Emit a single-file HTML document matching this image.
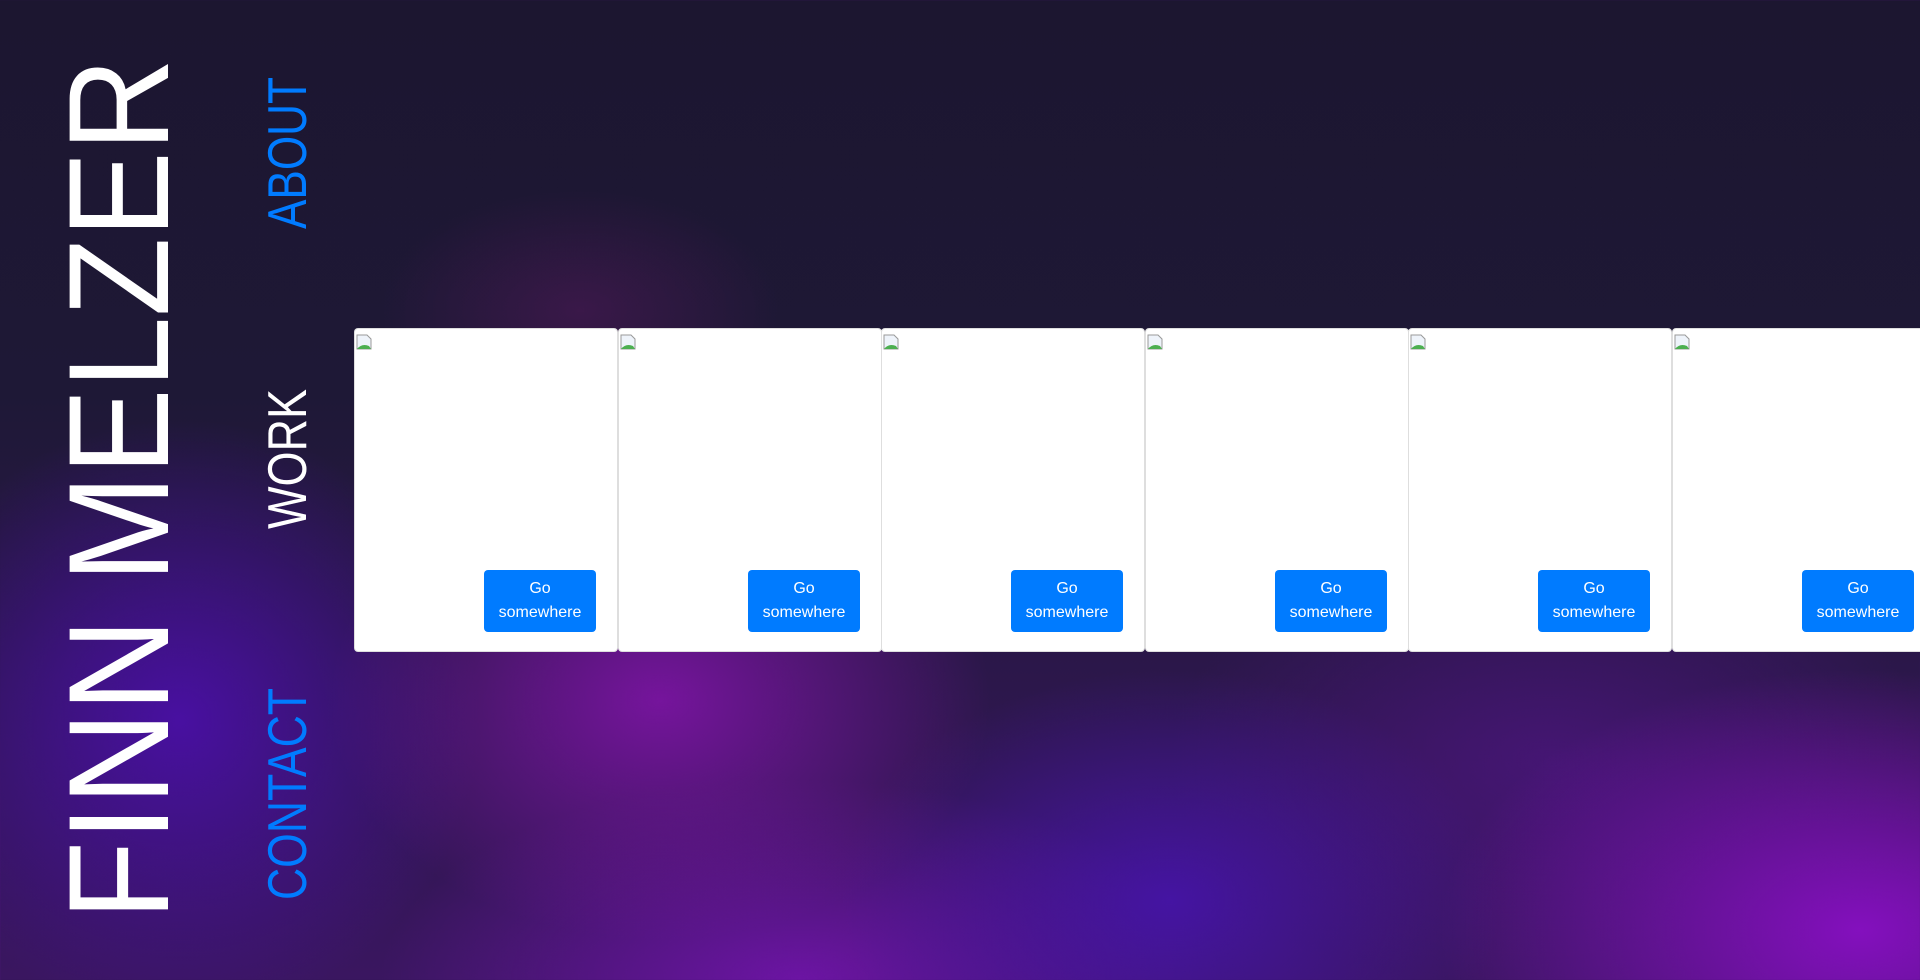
<!DOCTYPE html>
<html><head><meta charset="utf-8"><style>
html,body{margin:0;padding:0;width:1920px;height:980px;overflow:hidden}
body{position:relative;font-family:"Liberation Sans",sans-serif;
background:
radial-gradient(ellipse 330px 240px at 660px 700px,rgba(130,20,170,.85),rgba(130,20,170,0) 100%),
radial-gradient(ellipse 420px 260px at 1860px 930px,rgba(140,15,200,.9),rgba(140,15,200,0) 100%),
radial-gradient(ellipse 330px 230px at 1170px 900px,rgba(70,20,170,.9),rgba(70,20,170,0) 100%),
radial-gradient(ellipse 300px 300px at 180px 720px,rgba(75,15,170,.9),rgba(75,15,170,0) 100%),
radial-gradient(ellipse 420px 200px at 800px 980px,rgba(120,20,180,.8),rgba(120,20,180,0) 100%),
radial-gradient(ellipse 200px 120px at 580px 310px,rgba(110,25,110,.35),rgba(110,25,110,0) 100%),
radial-gradient(ellipse 380px 230px at 1550px 760px,rgba(90,20,150,.5),rgba(90,20,150,0) 100%),
linear-gradient(#1c1630,#1e1836 40%,#3a1660 100%);}
.card{position:absolute;top:328px;height:322px;width:262px;background:#fff;border:1px solid rgba(0,0,0,.13);border-radius:4px}
.ic{position:absolute;left:1px;top:5px}
.btn{position:absolute;right:21px;bottom:19px;width:112px;height:62px;background:#007bff;border-radius:4px;color:#fff;font-size:16px;line-height:24px;text-align:center;padding-top:7px;box-sizing:border-box}
svg.t{position:absolute;left:0;top:0}
</style></head><body>
<svg class="t" width="340" height="980">
<text transform="translate(168,920) rotate(-90)" font-family="Liberation Sans, sans-serif" font-size="143" fill="#fff" textLength="862" lengthAdjust="spacingAndGlyphs">FINN MELZER</text>
<text transform="translate(306,229) rotate(-90)" font-family="Liberation Sans, sans-serif" font-size="55" fill="#007bff" textLength="152" lengthAdjust="spacingAndGlyphs">ABOUT</text>
<text transform="translate(306,529) rotate(-90)" font-family="Liberation Sans, sans-serif" font-size="55" fill="#fff" textLength="140" lengthAdjust="spacingAndGlyphs">WORK</text>
<text transform="translate(306,900) rotate(-90)" font-family="Liberation Sans, sans-serif" font-size="55" fill="#007bff" textLength="212" lengthAdjust="spacingAndGlyphs">CONTACT</text>
</svg>
<div class="card" style="left:354px"><svg class="ic" width="16" height="16"><path d="M1 1h10l4 4v10H1z" fill="#eef3fa" stroke="#999"/><path d="M1 15 Q6 9 13 12 L15 15z" fill="#4caf50"/></svg><div class="btn">Go<br>somewhere</div></div>
<div class="card" style="left:618px"><svg class="ic" width="16" height="16"><path d="M1 1h10l4 4v10H1z" fill="#eef3fa" stroke="#999"/><path d="M1 15 Q6 9 13 12 L15 15z" fill="#4caf50"/></svg><div class="btn">Go<br>somewhere</div></div>
<div class="card" style="left:881px"><svg class="ic" width="16" height="16"><path d="M1 1h10l4 4v10H1z" fill="#eef3fa" stroke="#999"/><path d="M1 15 Q6 9 13 12 L15 15z" fill="#4caf50"/></svg><div class="btn">Go<br>somewhere</div></div>
<div class="card" style="left:1145px"><svg class="ic" width="16" height="16"><path d="M1 1h10l4 4v10H1z" fill="#eef3fa" stroke="#999"/><path d="M1 15 Q6 9 13 12 L15 15z" fill="#4caf50"/></svg><div class="btn">Go<br>somewhere</div></div>
<div class="card" style="left:1408px"><svg class="ic" width="16" height="16"><path d="M1 1h10l4 4v10H1z" fill="#eef3fa" stroke="#999"/><path d="M1 15 Q6 9 13 12 L15 15z" fill="#4caf50"/></svg><div class="btn">Go<br>somewhere</div></div>
<div class="card" style="left:1672px"><svg class="ic" width="16" height="16"><path d="M1 1h10l4 4v10H1z" fill="#eef3fa" stroke="#999"/><path d="M1 15 Q6 9 13 12 L15 15z" fill="#4caf50"/></svg><div class="btn">Go<br>somewhere</div></div>
</body></html>
